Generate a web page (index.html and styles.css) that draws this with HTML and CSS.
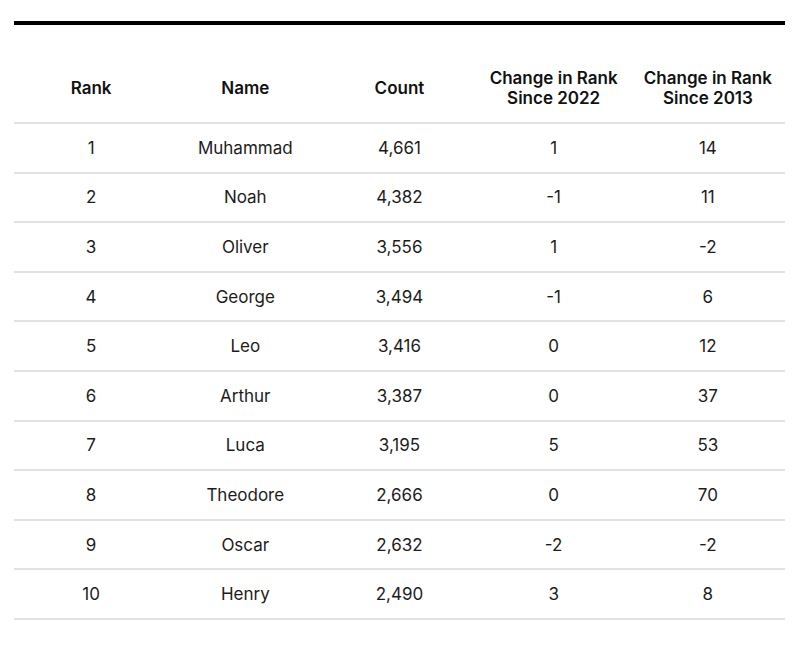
FILE: index.html
```html
<!DOCTYPE html>
<html>
<head>
<meta charset="utf-8">
<link rel="stylesheet" href="styles.css">
</head>
<body>
<div class="wrap">
  <div class="topline"></div>
  <table class="ranks">
    <thead>
      <tr>
        <th>Rank</th>
        <th>Name</th>
        <th>Count</th>
        <th>Change in Rank<br>Since 2022</th>
        <th>Change in Rank<br>Since 2013</th>
      </tr>
    </thead>
    <tbody>
      <tr><td>1</td><td>Muhammad</td><td>4,661</td><td>1</td><td>14</td></tr>
      <tr><td>2</td><td>Noah</td><td>4,382</td><td>-1</td><td>11</td></tr>
      <tr><td>3</td><td>Oliver</td><td>3,556</td><td>1</td><td>-2</td></tr>
      <tr><td>4</td><td>George</td><td>3,494</td><td>-1</td><td>6</td></tr>
      <tr><td>5</td><td>Leo</td><td>3,416</td><td>0</td><td>12</td></tr>
      <tr><td>6</td><td>Arthur</td><td>3,387</td><td>0</td><td>37</td></tr>
      <tr><td>7</td><td>Luca</td><td>3,195</td><td>5</td><td>53</td></tr>
      <tr><td>8</td><td>Theodore</td><td>2,666</td><td>0</td><td>70</td></tr>
      <tr><td>9</td><td>Oscar</td><td>2,632</td><td>-2</td><td>-2</td></tr>
      <tr><td>10</td><td>Henry</td><td>2,490</td><td>3</td><td>8</td></tr>
    </tbody>
  </table>
</div>
</body>
</html>
```
FILE: styles.css
```css
html, body {
  margin: 0;
  padding: 0;
  background: #fff;
}
.wrap {
  padding: 21px 15px 0 14px;
  font-family: Inter, "Liberation Sans", sans-serif;
}
.topline {
  height: 4px;
  background: #000;
}
.ranks {
  width: 100%;
  border-collapse: collapse;
  table-layout: fixed;
}
.ranks th {
  font-size: 17px;
  font-weight: 600;
  line-height: 20px;
  color: #111;
  padding: 43px 0 14px;
  text-align: center;
  vertical-align: middle;
  border-bottom: 2px solid #e2e2e2;
}
.ranks td {
  font-size: 17px;
  color: #1c1c1c;
  text-align: center;
  vertical-align: middle;
  height: 47.6px;
  padding: 0;
  border-bottom: 2px solid #e2e2e2;
}
```
